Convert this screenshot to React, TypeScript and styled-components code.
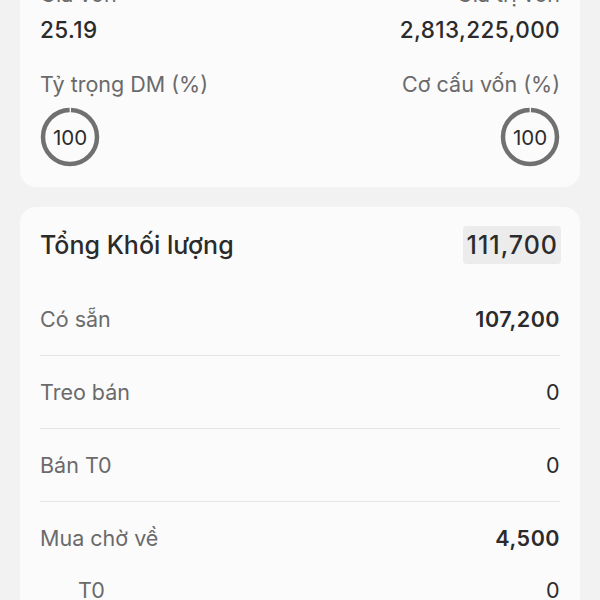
import React from "react"
import styled, { createGlobalStyle } from "styled-components"

const GlobalStyle = createGlobalStyle`
  html, body {
    margin: 0;
    padding: 0;
    background: #f2f2f2;
    font-family: Inter, "Noto Sans", sans-serif;
    overflow: hidden;
  }
`

interface RingProps {
  readonly value: number
}

const Ring = ({ value }: RingProps) => {
  const r = 27
  const c = 2 * Math.PI * r
  const gap = 2
  return (
    <StyledRing>
      <svg width="60" height="60" viewBox="0 0 60 60">
        <circle
          cx="30"
          cy="30"
          r={r}
          fill="none"
          stroke="#707071"
          strokeWidth="4.5"
          strokeDasharray={`${c - gap} ${gap}`}
          strokeDashoffset={-gap / 2}
          transform="rotate(-90 30 30)"
        />
      </svg>
      <StyledRingText>{value}</StyledRingText>
    </StyledRing>
  )
}

const rows = [
  { label: "Có sẵn", value: "107,200", bold: true },
  { label: "Treo bán", value: "0" },
  { label: "Bán T0", value: "0" },
]

export default () => (
  <>
    <GlobalStyle />
    <StyledPage>
      <StyledCard $top>
        <StyledGrid>
          <StyledCol>
            <StyledLabel>Giá vốn</StyledLabel>
            <StyledValue>25.19</StyledValue>
          </StyledCol>
          <StyledCol $right>
            <StyledLabel>Giá trị vốn</StyledLabel>
            <StyledValue>2,813,225,000</StyledValue>
          </StyledCol>
          <StyledCol>
            <StyledLabel>Tỷ trọng DM (%)</StyledLabel>
            <Ring value={100} />
          </StyledCol>
          <StyledCol $right>
            <StyledLabel>Cơ cấu vốn (%)</StyledLabel>
            <Ring value={100} />
          </StyledCol>
        </StyledGrid>
      </StyledCard>

      <StyledCard>
        <StyledHeader>
          <StyledTitle>Tổng Khối lượng</StyledTitle>
          <StyledTotal>111,700</StyledTotal>
        </StyledHeader>
        <StyledList>
          {rows.map(row => (
            <StyledRow key={row.label}>
              <StyledRowLabel>{row.label}</StyledRowLabel>
              <StyledRowValue $bold={row.bold}>{row.value}</StyledRowValue>
            </StyledRow>
          ))}
          <StyledRow $plain>
            <StyledRowLabel>Mua chờ về</StyledRowLabel>
            <StyledRowValue $bold>4,500</StyledRowValue>
          </StyledRow>
          <StyledSubRow>
            <StyledRowLabel>T0</StyledRowLabel>
            <StyledRowValue>0</StyledRowValue>
          </StyledSubRow>
        </StyledList>
      </StyledCard>
    </StyledPage>
  </>
)

const StyledPage = styled.div`
  display: flex;
  flex-direction: column;
  gap: 20px;
  padding: 0 20px;
  margin-top: -31px;
`

const StyledCard = styled.div<{ $top?: boolean }>`
  background: #fbfbfb;
  border-radius: 16px;
  padding: ${props => (props.$top ? "12px 20px 20px" : "19px 20px 20px")};
`

const StyledGrid = styled.div`
  display: grid;
  grid-template-columns: 1fr 1fr;
  row-gap: 28px;
`

const StyledCol = styled.div<{ $right?: boolean }>`
  display: flex;
  flex-direction: column;
  align-items: ${props => (props.$right ? "flex-end" : "flex-start")};
  gap: 10px;
`

const StyledLabel = styled.div`
  font-size: 21.5px;
  line-height: 26px;
  color: #6a6a6b;
  white-space: nowrap;
`

const StyledValue = styled.div`
  font-size: 22.5px;
  line-height: 26px;
  font-weight: 500;
  color: #2b2b2c;
  letter-spacing: 0.4px;
`

const StyledRing = styled.div`
  position: relative;
  width: 60px;
  height: 60px;
  svg {
    display: block;
  }
`

const StyledRingText = styled.span`
  position: absolute;
  inset: 0;
  display: flex;
  align-items: center;
  justify-content: center;
  font-size: 20.5px;
  color: #2b2b2c;
`

const StyledHeader = styled.div`
  display: flex;
  align-items: center;
  justify-content: space-between;
  height: 38px;
`

const StyledTitle = styled.div`
  font-size: 25px;
  font-weight: 500;
  color: #2b2b2c;
`

const StyledTotal = styled.div`
  background: #ececec;
  border-radius: 4px;
  padding: 0 3px 0 4px;
  margin-right: -1px;
  height: 38px;
  display: flex;
  align-items: center;
  font-size: 25px;
  font-weight: 500;
  color: #2b2b2c;
  letter-spacing: 1px;
`

const StyledList = styled.div`
  margin-top: 19px;
  display: flex;
  flex-direction: column;
`

const StyledRow = styled.div<{ $plain?: boolean }>`
  display: flex;
  align-items: center;
  justify-content: space-between;
  height: 72px;
  border-bottom: ${props => (props.$plain ? "none" : "1px solid #e5e5e5")};
`

const StyledSubRow = styled(StyledRow)`
  height: 32px;
  border-bottom: none;
  padding-left: 38px;
`

const StyledRowLabel = styled.div`
  font-size: 21.5px;
  color: #6a6a6b;
`

const StyledRowValue = styled.div<{ $bold?: boolean }>`
  font-size: 21.5px;
  font-weight: ${props => (props.$bold ? 600 : 400)};
  color: #2b2b2c;
  letter-spacing: 0.5px;
`
